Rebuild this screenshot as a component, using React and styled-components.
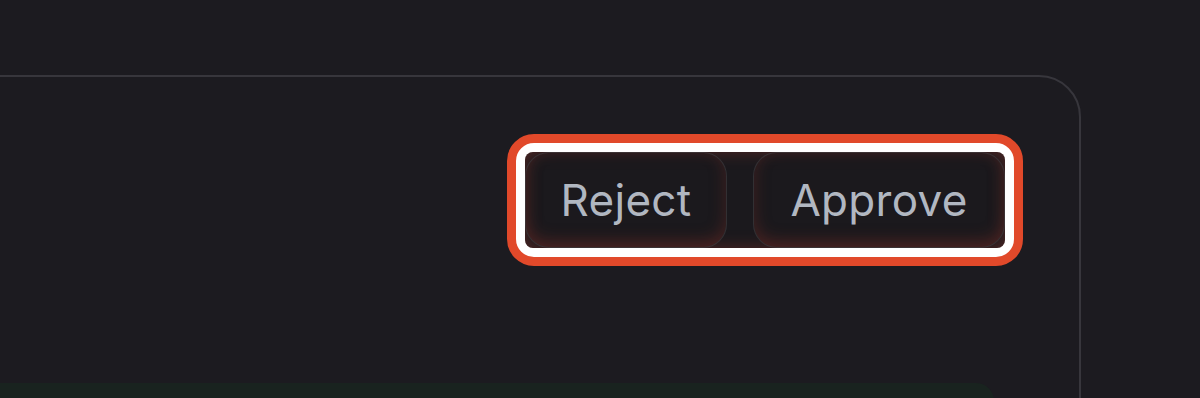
import React from "react";
import styled, { createGlobalStyle } from "styled-components";

const Global = createGlobalStyle`
  html, body { margin: 0; padding: 0; background: #1c1b20; }
  body { font-family: Inter, "Noto Sans", sans-serif; overflow: hidden; }
`;

const Page = styled.div`
  width: 1200px;
  height: 398px;
  padding-top: 75px;
  box-sizing: border-box;
  overflow: hidden;
  background: #1c1b20;
`;

const Panel = styled.section`
  margin-left: -80px;
  width: 1161px;
  height: 400px;
  box-sizing: border-box;
  border: 2px solid #37363c;
  border-radius: 42px;
  background: #1c1b20;
  padding: 57px 56px 0 0;
  display: flex;
  flex-direction: column;
  align-items: flex-end;
`;

const Ring = styled.div`
  border: 9px solid #e1492a;
  border-radius: 27px;
  background: #ffffff;
  padding: 9px;
`;

const Group = styled.div`
  display: flex;
  gap: 26px;
  height: 96px;
  border-radius: 8px;
  background: #1b191d;
  box-shadow: inset 0 0 16px rgba(150, 55, 45, 0.45);
`;

const Button = styled.button`
  width: ${(p) => p.$w}px;
  height: 96px;
  box-sizing: border-box;
  border: 1.5px solid rgba(255, 255, 255, 0.1);
  border-radius: 24px;
  background: rgba(28, 26, 30, 0.55);
  box-shadow: inset 0 -6px 16px rgba(140, 50, 40, 0.35);
  color: #b1b7c1;
  font-family: Inter, "Noto Sans", sans-serif;
  font-size: 44px;
  font-weight: 400;
  letter-spacing: 0.3px;
  display: flex;
  align-items: center;
  justify-content: center;
  padding: 0;
  cursor: pointer;
`;

const CodeBlock = styled.div`
  margin-top: 117px;
  margin-right: 29px;
  width: 1073px;
  height: 60px;
  border-radius: 18px;
  background: #19231f;
`;

export default function App() {
  return (
    <>
      <Global />
      <Page>
        <Panel>
          <Ring>
            <Group>
              <Button $w={202}>Reject</Button>
              <Button $w={252}>Approve</Button>
            </Group>
          </Ring>
          <CodeBlock />
        </Panel>
      </Page>
    </>
  );
}
